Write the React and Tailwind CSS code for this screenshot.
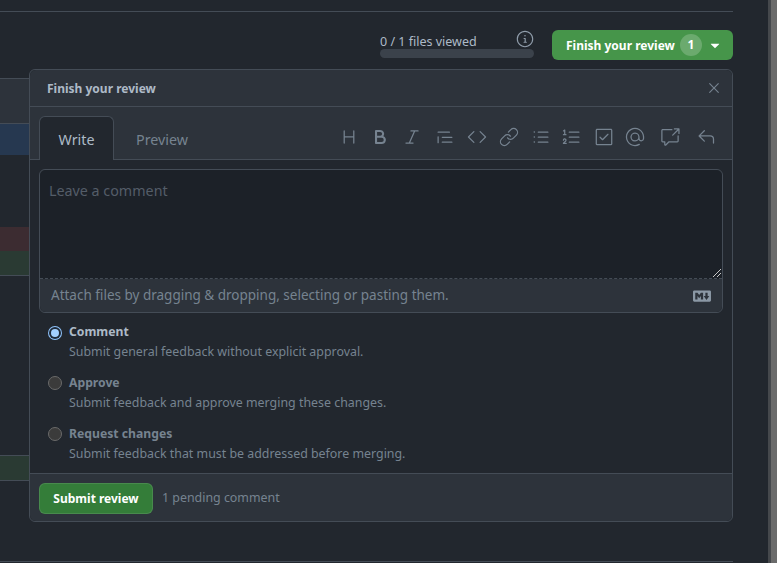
import {
  GoBold, GoCheckbox, GoCode, GoCrossReference, GoHeading, GoInfo, GoItalic, GoLink, GoListOrdered,
  GoListUnordered, GoMention, GoQuote, GoReply, GoTriangleDown, GoX,
} from 'react-icons/go';

const toolbar = [
  [GoHeading, ''], [GoBold, 'ml-[11px]'], [GoItalic, 'ml-[12px]'], [GoQuote, 'ml-[13px]'],
  [GoCode, 'ml-[12px]'], [GoLink, 'ml-[12px]'], [GoListUnordered, 'ml-[12px]'], [GoListOrdered, 'ml-[11px]'],
  [GoCheckbox, 'ml-[12px]'], [GoMention, 'ml-[11px]'], [GoCrossReference, 'ml-[15px]'], [GoReply, 'ml-[16px]'],
];

const options = [
  { title: 'Comment', text: 'Submit general feedback without explicit approval.', checked: true },
  { title: 'Approve', text: 'Submit feedback and approve merging these changes.' },
  { title: 'Request changes', text: 'Submit feedback that must be addressed before merging.' },
];

function MarkdownIcon() {
  return (
    <svg width="18" height="18" viewBox="0 0 16 16" fill="#8b98a5">
      <path d="M14.85 3c.63 0 1.15.52 1.14 1.15v7.7c0 .63-.51 1.15-1.15 1.15H1.15C.52 13 0 12.48 0 11.84V4.15C0 3.52.52 3 1.15 3ZM9 11V5H7L5.5 7 4 5H2v6h2V8l1.5 1.92L7 8v3Zm2.99.5L14.5 8H13V5h-2v3H9.5Z" />
    </svg>
  );
}

function ReviewOption({ title, text, checked }) {
  return (
    <div className="flex h-[40px] pl-[18px]">
      {checked ? (
        <span className="mt-[4px] flex h-[14px] w-[14px] items-center justify-center rounded-full bg-[#8fc3fb]">
          <span className="flex h-[12px] w-[12px] items-center justify-center rounded-full bg-[#1f2a38]">
            <span className="h-[8px] w-[8px] rounded-full bg-[#a3d0ff]" />
          </span>
        </span>
      ) : (
        <span className="mt-[3px] h-[14px] w-[14px] rounded-full border border-[#6a6a6a] bg-[#3b3b3b]" />
      )}
      <div className="ml-[7px]">
        <p className={`text-[12.2px] font-bold leading-[20px] ${checked ? 'text-[#adbac7]' : 'text-[#768390]'}`}>{title}</p>
        <p className="text-[12.4px] leading-[20px] text-[#768390]">{text}</p>
      </div>
    </div>
  );
}

export default function App() {
  return (
    <div className="flex h-[563px] w-[777px] overflow-hidden bg-[#22272e] font-['Noto_Sans',sans-serif]">
      <main className="relative flex-1 pr-[35px]">
        <div className="h-[12px] border-b border-[#444c56]" />

        {/* Progress and review button */}
        <div className="mt-[18px] flex h-[30px] justify-end">
          <div className="relative mr-[18px] w-[154px]">
            <span className="absolute left-0 top-[3px] text-[12.5px] leading-[18px] text-[#adbac7]">0 / 1 files viewed</span>
            <GoInfo className="absolute right-0 top-0 text-[#909dab]" size={18} />
            <div className="absolute bottom-[2px] left-0 h-[9px] w-full rounded-full bg-[#3b424b]" />
          </div>
          <button className="flex w-[181px] items-center rounded-[6px] bg-[#46954a] pl-[14px] text-[12px] font-bold text-white">
            <span className="w-[108px] whitespace-nowrap pt-[1px] text-left">Finish your review</span>
            <span className="ml-[6px] flex h-[22px] w-[22px] items-center justify-center rounded-full bg-white/20 text-[12px]">1</span>
            <GoTriangleDown className="ml-[5px] mt-[1px]" size={16} />
          </button>
        </div>

        {/* Diff behind the popover */}
        <div className="mt-[18px] flex flex-col">
          <div className="h-[46px] border-y border-[#444c56] bg-[#2d333b]" />
          <div className="h-[31px] bg-[#263850]" />
          <div className="h-[72px]" />
          <div className="h-[24px] bg-[#3c2c31]" />
          <div className="h-[24px] bg-[#2a3a33]" />
          <div className="h-[180px] border-t border-[#444c56]" />
          <div className="h-[26px] border-y border-[#444c56] bg-[#2a3a33]" />
          <div className="mt-[80px] h-[1px] bg-[#444c56]" />
        </div>

        {/* Popover */}
        <div className="absolute left-[29px] top-[69px] flex h-[453px] w-[704px] flex-col rounded-[6px] border border-[#444c56] bg-[#22272e]">
          <div className="flex h-[37px] shrink-0 items-center justify-between rounded-t-[6px] border-b border-[#444c56] bg-[#2d333b] pl-[17px] pr-[9px]">
            <span className="pt-[1px] text-[12px] font-bold text-[#adbac7]">Finish your review</span>
            <GoX className="text-[#768390]" size={18} />
          </div>

          <div className="flex h-[53px] shrink-0 border-b border-[#444c56] bg-[#2d333b] pl-[9px]">
            <div className="mt-[9px] flex h-[44px] w-[75px] items-center justify-center rounded-t-[6px] border border-b-0 border-[#444c56] bg-[#22272e] pt-[3px] text-[14.3px] text-[#adbac7]">
              Write
            </div>
            <div className="mt-[9px] flex h-[44px] w-[96px] items-center justify-center pt-[3px] text-[14.3px] text-[#768390]">
              Preview
            </div>
            <div className="ml-auto mt-[20px] flex h-[20px] pr-[16px] text-[#768390]">
              {toolbar.map(([Icon, gap], i) => (
                <Icon key={i} size={20} className={gap} />
              ))}
            </div>
          </div>

          <div className="mx-[9px] mt-[9px] flex h-[144px] shrink-0 flex-col rounded-[6px] border border-[#444c56]">
            <div className="relative h-[109px] rounded-t-[6px] border-b border-dashed border-[#444c56] bg-[#1c2128] px-[9px] pt-[10px] text-[14.3px] leading-[22px] text-[#545d68]">
              Leave a comment
              <svg className="absolute bottom-[1px] right-[1px]" width="8" height="8" viewBox="0 0 8 8" stroke="#c8c8c8" strokeWidth="1">
                <path d="M0 8 8 0M4 8 8 4" />
              </svg>
            </div>
            <div className="flex flex-1 items-center justify-between rounded-b-[6px] bg-[#2d333b] pl-[11px] pr-[11px] text-[13.5px] text-[#768390]">
              Attach files by dragging &amp; dropping, selecting or pasting them.
              <MarkdownIcon />
            </div>
          </div>

          <div className="mt-[9px] flex flex-1 flex-col gap-[11px]">
            {options.map((o) => (
              <ReviewOption key={o.title} {...o} />
            ))}
          </div>

          <div className="flex h-[48px] shrink-0 items-center rounded-b-[6px] border-t border-[#444c56] bg-[#2d333b] pl-[9px] pt-[2px]">
            <button className="h-[31px] w-[114px] rounded-[6px] border border-white/10 bg-[#347d39] text-[12px] font-bold text-white">
              Submit review
            </button>
            <span className="ml-[9px] text-[12.4px] text-[#768390]">1 pending comment</span>
          </div>
        </div>
      </main>

      {/* Window scrollbar */}
      <div className="w-[9px] border-l-[3px] border-[#45484c] bg-[#6b6b6b]" />
    </div>
  );
}
